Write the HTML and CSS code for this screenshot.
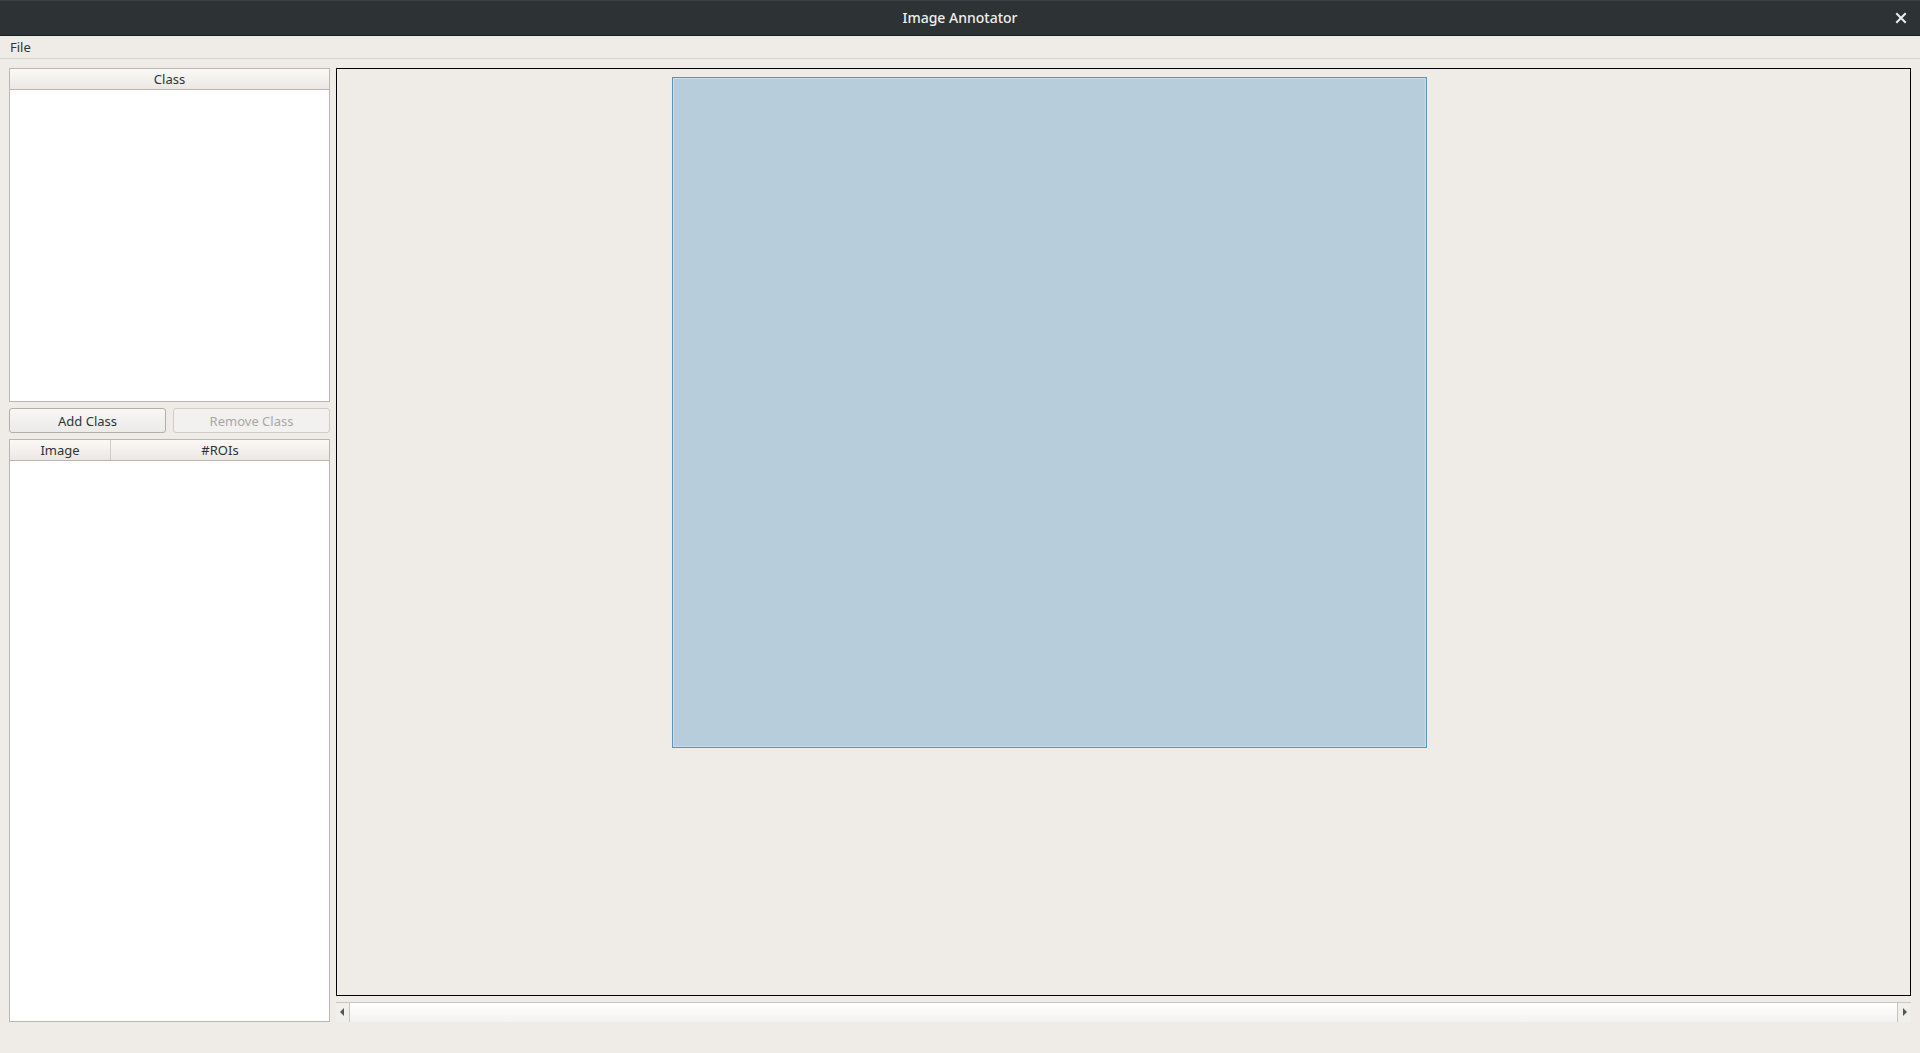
FILE: index.html
```html
<!DOCTYPE html>
<html lang="en">
<head>
  <meta charset="UTF-8">
  <title>Image Annotator</title>
  <link rel="stylesheet" href="styles.css">
</head>
<body>
  <header class="titlebar">
    <span class="title">Image Annotator</span>
    <svg class="close" width="12" height="12" viewBox="0 0 12 12">
      <path d="M2 2 L10 10 M10 2 L2 10" stroke="#eeeeec" stroke-width="2" stroke-linecap="square"/>
    </svg>
  </header>
  <nav class="menubar">
    <span class="menu-item">File</span>
  </nav>
  <main class="workspace">
    <aside class="sidebar">
      <div class="frame class-list">
        <div class="header">
          <div class="col">Class</div>
        </div>
        <div class="body"></div>
      </div>
      <div class="buttons">
        <button class="btn">Add Class</button>
        <button class="btn" disabled>Remove Class</button>
      </div>
      <div class="frame image-list">
        <div class="header">
          <div class="col col-image">Image</div>
          <div class="col col-rois">#ROIs</div>
        </div>
        <div class="body"></div>
      </div>
    </aside>
    <section class="viewer">
      <div class="canvas">
        <div class="picture"></div>
      </div>
      <div class="hscroll">
        <div class="arrow arrow-left"></div>
        <div class="trough"></div>
        <div class="arrow arrow-right"></div>
      </div>
    </section>
  </main>
</body>
</html>
```

FILE: styles.css
```css
body { margin: 0; height: 1053px; overflow: hidden; background: #efece8; font-family: 'Noto Sans', 'DejaVu Sans', sans-serif; font-size: 13px; color: #2e3436; }

.titlebar { height: 36px; box-sizing: border-box; background: #2d3234; border-top: 1px solid #3a3f41; border-bottom: 1px solid #1b1e1f; display: flex; align-items: center; justify-content: center; position: relative; }
.title { color: #eeeeec; font-size: 14px; font-weight: 500; margin-top: -2px; }
.close { position: absolute; right: 13px; top: 11px; }

.menubar { height: 23px; box-sizing: border-box; border-bottom: 1px solid #d6d2cd; display: flex; align-items: center; padding-left: 10px; }
.menu-item { font-size: 13px; }

.workspace { display: flex; align-items: flex-start; gap: 6px; padding: 9px 9px 0 9px; }

.sidebar { width: 321px; display: flex; flex-direction: column; gap: 6px; }
.frame { border: 1px solid #bab6b1; background: #fff; display: flex; flex-direction: column; box-sizing: border-box; }
.class-list { height: 334px; }
.image-list { height: 583px; }
.header { display: flex; height: 21px; box-sizing: border-box; border-bottom: 1px solid #bab6b1; background: linear-gradient(#fbf9f7, #ebe8e4); }
.col { flex: 1; text-align: center; line-height: 20px; }
.col-image { flex: 0 0 100px; border-right: 1px solid #cfcbc6; }
.body { flex: 1; }

.buttons { display: flex; gap: 7px; height: 25px; }
.btn { flex: 1; font: inherit; color: #2e3436; border: 1px solid #b3afaa; border-radius: 3px; background: linear-gradient(#f7f6f5, #edebe8); padding: 0; }
.btn:disabled { color: #a9a7a4; border-color: #d0ccc8; background: #f3f1ef; }

.viewer { flex: 1; display: flex; flex-direction: column; gap: 6px; }
.canvas { flex: 0 0 928px; box-sizing: border-box; border: 1px solid #000; padding: 8px 0 0 335px; }
.picture { width: 755px; height: 671px; box-sizing: border-box; background: #b8cddb; border: 1px solid #5a93bf; box-shadow: inset 0 0 0 1px #cbdce8; }

.hscroll { flex: 0 0 20px; display: flex; border-top: 1px solid #c8c4bf; box-sizing: border-box; }
.trough { flex: 1; background: linear-gradient(#ffffff, #f4f2f0); border-left: 1px solid #c8c4bf; border-right: 1px solid #c8c4bf; }
.arrow { width: 13px; background: #f1efec; position: relative; }
.arrow::after { content: ''; position: absolute; top: 5px; border-top: 4px solid transparent; border-bottom: 4px solid transparent; }
.arrow-left::after { left: 4px; border-right: 4px solid #555753; }
.arrow-right::after { left: 5px; border-left: 4px solid #555753; }
```
